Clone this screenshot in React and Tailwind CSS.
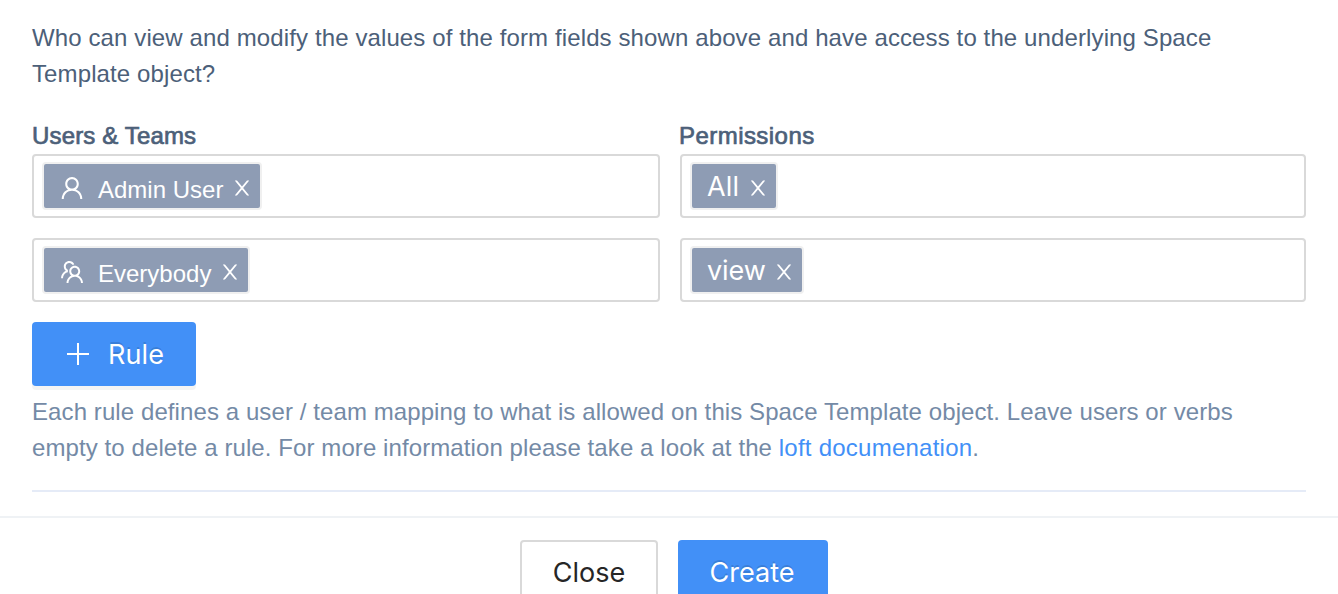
import React from "react";
import { AiOutlineUser, AiOutlineTeam } from "react-icons/ai";

function CloseIcon() {
  return (
    <svg viewBox="0 0 1024 1024" fill="currentColor" className="ml-auto mr-[7px] mt-1 size-[22px] shrink-0 overflow-visible">
      <path d="M563.8 512l262.5-312.9c4.4-5.2.7-13.1-6.1-13.1h-79.8c-4.7 0-9.2 2.1-12.3 5.7L511.6 449.8 295.1 191.7c-3-3.6-7.5-5.7-12.3-5.7H203c-6.8 0-10.5 7.9-6.1 13.1L459.4 512 196.9 824.9A7.95 7.95 0 0 0 203 838h79.8c4.7 0 9.2-2.1 12.3-5.7l216.5-258.1 216.5 258.1c3 3.6 7.5 5.7 12.3 5.7h79.8c6.8 0 10.5-7.9 6.1-13.1L563.8 512z" transform="translate(512 512) scale(1.04 1.06) translate(-512 -512)" />
    </svg>
  );
}

function Field({ children }) {
  return (
    <div className="flex h-16 items-center rounded-[4px] border-2 border-[#d9d9d9] bg-white pl-2">
      {children}
    </div>
  );
}

function Tag({ className, children }) {
  return (
    <div className={"flex h-12 items-center rounded-[4px] border-2 border-[#f0f0f0] bg-[#8e9cb4] text-white " + className}>
      {children}
    </div>
  );
}

function Member({ icon: Icon, name, className }) {
  return (
    <Tag className={className}>
      <Icon className="ml-[14px] mt-[3px] size-7 shrink-0" />
      <span className="ml-3 mt-2 shrink-0 whitespace-nowrap text-[24px] leading-9">{name}</span>
      <CloseIcon />
    </Tag>
  );
}

function Verb({ name, className, textClass }) {
  return (
    <Tag className={className}>
      <span className={"ml-[15px] mt-0.5 shrink-0 whitespace-nowrap font-['Inter',sans-serif] text-[27px] leading-10 " + textClass}>{name}</span>
      <CloseIcon />
    </Tag>
  );
}

export default function App() {
  return (
    <div className="h-[594px] w-[1338px] overflow-hidden bg-white font-['Liberation_Sans',Arial,sans-serif] text-[24px] leading-9 text-[#4c6079]">
      <div className="px-8 pt-5">
        <p className="whitespace-nowrap tracking-[0.115px]">
          <span>Who can view and modify the values of the form fields shown above and have access to the underlying Space</span>
          <br />
          <span>Template object?</span>
        </p>
        <div className="mt-[26px] grid grid-cols-[628px_626px] gap-x-5">
          <div className="h-9 whitespace-nowrap tracking-[0.15px] [-webkit-text-stroke:0.7px_#4c6079]">Users &amp; Teams</div>
          <div className="-ml-px h-9 whitespace-nowrap tracking-[0.45px] [-webkit-text-stroke:0.7px_#4c6079]">Permissions</div>
          <Field><Member icon={AiOutlineUser} name="Admin User" className="w-[220px]" /></Field>
          <Field><Verb name="All" className="w-[88px]" textClass="tracking-[0.2px]" /></Field>
          <div className="col-span-2 h-5" />
          <Field><Member icon={AiOutlineTeam} name="Everybody" className="w-[208px]" /></Field>
          <Field><Verb name="view" className="w-[114px]" textClass="tracking-[-0.1px]" /></Field>
        </div>
        <button className="mt-5 flex h-16 w-[164px] items-center rounded-[4px] bg-[#4290f7] pl-[35px] pt-0.5 font-['Inter',sans-serif] text-[27px] text-white shadow-[0_4px_0_rgba(0,0,0,0.045)] [text-shadow:0_-2px_0_rgba(0,0,0,0.12)]">
          <svg viewBox="0 0 22 22" fill="currentColor" className="-mt-0.5 size-[22px]">
            <path d="M10 0h2v10h10v2H12v10h-2V12H0v-2h10z" />
          </svg>
          <span className="ml-[19px] tracking-[0.1px]">Rule</span>
        </button>
        <p className="mt-2 whitespace-nowrap text-[#748aa6]">
          <span className="tracking-[0.09px]">Each rule defines a user / team mapping to what is allowed on this Space Template object. Leave users or verbs</span>
          <br />
          <span className="tracking-[0.09px]">empty to delete a rule. For more information please take a look at the <a className="tracking-[0.24px] text-[#4290f7]">loft documenation</a>.</span>
        </p>
        <div className="mt-6 h-0.5 w-[1274px] bg-[#e5ebf7]" />
      </div>
      <div className="mt-6 flex gap-5 border-t-2 border-[#eff2f5] pl-[520px] pt-[22px] font-['Inter',sans-serif] text-[27px]">
        <button className="h-16 w-[138px] rounded-[4px] border-2 border-[#d9d9d9] bg-white pt-0.5 text-[#262626]">Close</button>
        <button className="h-16 w-[150px] rounded-[4px] bg-[#4290f7] pr-0.5 pt-0.5 text-white [text-shadow:0_-2px_0_rgba(0,0,0,0.12)]">Create</button>
      </div>
    </div>
  );
}
